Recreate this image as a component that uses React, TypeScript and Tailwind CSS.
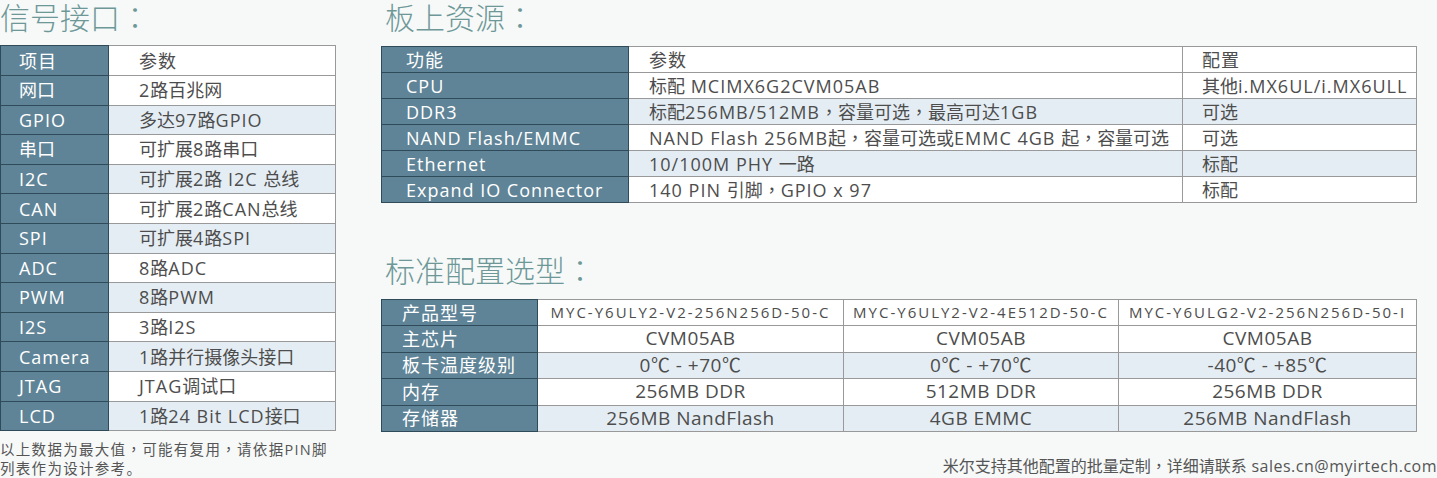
import React from "react";

const FONT = "font-['Open_Sans','Noto_Sans_CJK_SC',sans-serif]";
const CJK = /([\u3000-\u9fff\uff00-\uffef]+)/;

// CJK runs keep normal spacing; full-width comma/colon are centred (TC glyphs)
const Txt = ({ s }: { s: string }) => (
	<>
		{s.split(CJK).map((run, i) => {
			if (!run) return null;
			if (!/[\u3000-\u9fff\uff00-\uffef]/.test(run)) return <React.Fragment key={i}>{run}</React.Fragment>;
			return (
				<span key={i} className="tracking-normal">
					{run.split(/([，：])/).map((p, j) =>
						p === "，" || p === "：" ? (
							<span key={j} className="inline-block leading-[1] font-['Noto_Sans_CJK_TC',sans-serif]">
								{p}
							</span>
						) : (
							<React.Fragment key={j}>{p}</React.Fragment>
						)
					)}
				</span>
			);
		})}
	</>
);

// Signal interface rows: [item, value, shaded]
const signalRows: [string, string, boolean][] = [
	["网口", "2路百兆网", false],
	["GPIO", "多达97路GPIO", true],
	["串口", "可扩展8路串口", false],
	["I2C", "可扩展2路 I2C 总线", true],
	["CAN", "可扩展2路CAN总线", false],
	["SPI", "可扩展4路SPI", true],
	["ADC", "8路ADC", false],
	["PWM", "8路PWM", true],
	["I2S", "3路I2S", false],
	["Camera", "1路并行摄像头接口", true],
	["JTAG", "JTAG调试口", false],
	["LCD", "1路24 Bit LCD接口", true],
];

const boardRows: [string, string, string, boolean][] = [
	["CPU", "标配 MCIMX6G2CVM05AB", "其他i.MX6UL/i.MX6ULL", false],
	["DDR3", "标配256MB/512MB，容量可选，最高可达1GB", "可选", true],
	["NAND Flash/EMMC", "NAND Flash 256MB起，容量可选或EMMC 4GB 起，容量可选", "可选", false],
	["Ethernet", "10/100M PHY 一路", "标配", true],
	["Expand IO Connector", "140 PIN 引脚，GPIO x 97", "标配", false],
];

const modelRows: [string, string[], boolean][] = [
	["主芯片", ["CVM05AB", "CVM05AB", "CVM05AB"], false],
	["板卡温度级别", ["0℃ - +70℃", "0℃ - +70℃", "-40℃ - +85℃"], true],
	["内存", ["256MB DDR", "512MB DDR", "256MB DDR"], false],
	["存储器", ["256MB NandFlash", "4GB EMMC", "256MB NandFlash"], true],
];

const Title = ({ children }: { children: string }) => (
	<h2 className="pt-[1px] text-[30px] leading-[33px] text-[#6e9898] font-light tracking-[1px] whitespace-nowrap">
		<Txt s={children} />
	</h2>
);

export default function App() {
	return (
		<div className={`${FONT} w-[1437px] h-[478px] bg-[#f7f9f9] flex text-[#4d4d4d] overflow-hidden`}>
			{/* Signal interfaces */}
			<div className="w-[336px] shrink-0 flex flex-col">
				<div className="h-[45px] shrink-0">
					<Title>信号接口：</Title>
				</div>
				<table className="w-[336px] shrink-0 border-collapse text-[18px] leading-none tracking-[1px]">
					<tbody>
						<tr className="h-[30px]">
							<td className="w-[108px] bg-[#5f8497] text-white pl-[18px] border border-[#2f4a58]">项目</td>
							<td className="bg-white pl-[30px] border border-[#999]">参数</td>
						</tr>
						{signalRows.map(([item, value, shaded]) => (
							<tr key={item} className="h-[29.6px]">
								<td className="bg-[#5f8497] text-white pl-[18px] border border-[#2f4a58]">
									<Txt s={item} />
								</td>
								<td className={`pl-[30px] border border-[#999] whitespace-nowrap ${shaded ? "bg-[#e5edf4]" : "bg-white"}`}>
									<Txt s={value} />
								</td>
							</tr>
						))}
					</tbody>
				</table>
				<div className="mt-[9px] shrink-0 text-[14.5px] leading-[19px] tracking-[1.3px] text-[#555] whitespace-nowrap">
					<p>
						以上数据为最大值
						<span className="inline-block leading-[1] font-['Noto_Sans_CJK_TC',sans-serif]">，</span>
						可能有复用
						<span className="inline-block leading-[1] font-['Noto_Sans_CJK_TC',sans-serif]">，</span>
						请依据PIN脚
					</p>
					<p>列表作为设计参考。</p>
				</div>
			</div>

			{/* Board resources + standard configurations */}
			<div className="ml-[45px] w-[1036px] shrink-0 flex flex-col">
				<div className="pl-[4px] h-[46px] shrink-0">
					<Title>板上资源：</Title>
				</div>
				<table className="w-[1036px] border-collapse text-[18px] leading-none tracking-[1px]">
					<tbody>
						<tr className="h-[26px]">
							<td className="w-[247px] bg-[#5f8497] text-white pl-[24px] border border-[#2f4a58]">功能</td>
							<td className="w-[554px] bg-white pl-[20px] border border-[#999]">参数</td>
							<td className="bg-white pl-[19px] border border-[#999]">配置</td>
						</tr>
						{boardRows.map(([name, param, conf, shaded]) => (
							<tr key={name} className="h-[26px]">
								<td className="bg-[#5f8497] text-white pl-[24px] border border-[#2f4a58] whitespace-nowrap">{name}</td>
								<td className={`pl-[20px] border border-[#999] whitespace-nowrap ${shaded ? "bg-[#e5edf4]" : "bg-white"}`}>
									<Txt s={param} />
								</td>
								<td className={`pl-[19px] border border-[#999] whitespace-nowrap ${shaded ? "bg-[#e5edf4]" : "bg-white"}`}>
									<Txt s={conf} />
								</td>
							</tr>
						))}
					</tbody>
				</table>

				<div className="pl-[4px] mt-[50px] h-[46px] shrink-0">
					<Title>标准配置选型：</Title>
				</div>
				<table className="w-[1036px] border-collapse text-[18px] leading-none">
					<tbody>
						<tr className="h-[26px]">
							<td className="w-[156px] bg-[#5f8497] text-white pl-[20px] border border-[#2f4a58] tracking-[1px]">产品型号</td>
							<td className="w-[306px] bg-white text-center border border-[#999] text-[15px] tracking-[2px] whitespace-nowrap">MYC-Y6ULY2-V2-256N256D-50-C</td>
							<td className="w-[275px] bg-white text-center border border-[#999] text-[15px] tracking-[2px] whitespace-nowrap">MYC-Y6ULY2-V2-4E512D-50-C</td>
							<td className="bg-white text-center border border-[#999] text-[15px] tracking-[2px] whitespace-nowrap">MYC-Y6ULG2-V2-256N256D-50-I</td>
						</tr>
						{modelRows.map(([label, vals, shaded]) => (
							<tr key={label} className="h-[26.5px]">
								<td className="bg-[#5f8497] text-white pl-[20px] border border-[#2f4a58] tracking-[1px]">{label}</td>
								{vals.map((v, i) => (
									<td
										key={i}
										className={`text-center border border-[#999] text-[19px] tracking-[0.5px] ${shaded ? "bg-[#e5edf4]" : "bg-white"}`}
									>
										{v}
									</td>
								))}
							</tr>
						))}
					</tbody>
				</table>
				<p className="mt-auto mb-[2px] -mr-[20px] text-right text-[16px] leading-[20px] text-[#555] whitespace-nowrap tracking-[0.5px]">
					<Txt s="米尔支持其他配置的批量定制，详细请联系 sales.cn@myirtech.com" />
				</p>
			</div>
		</div>
	);
}
